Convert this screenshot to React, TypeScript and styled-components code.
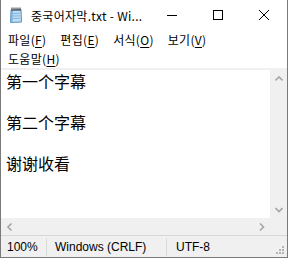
import React from 'react';
import styled, { createGlobalStyle } from 'styled-components';

const Global = createGlobalStyle`
  html, body { margin: 0; padding: 0; background: #fff; }
  body { width: 288px; height: 258px; overflow: hidden; }
`;

const Window = styled.div`
  width: 288px;
  height: 258px;
  box-sizing: border-box;
  border: 1px solid #7a7a7a;
  border-top: none;
  display: flex;
  flex-direction: column;
  background: #fff;
  font-family: "Noto Sans CJK KR", "Noto Sans", sans-serif;
  color: #000;
`;

const TitleBar = styled.div`
  height: 30px;
  display: flex;
  align-items: center;
  flex-shrink: 0;
`;

const AppIcon = styled.svg`
  margin-left: 7px;
  flex-shrink: 0;
`;

const TitleText = styled.div`
  margin-left: 7px;
  font-size: 12px;
  letter-spacing: 0.3px;
  white-space: nowrap;
  flex: 1;
  overflow: hidden;
`;

const CtrlButton = styled.div`
  width: 46px;
  height: 30px;
  display: flex;
  align-items: center;
  justify-content: center;
  flex-shrink: 0;
`;

const MenuBar = styled.div`
  display: flex;
  flex-direction: column;
  border-bottom: 2px solid #f0f0f0;
  flex-shrink: 0;
`;

const MenuRow = styled.div`
  display: flex;
  height: 19px;
`;

const MenuItem = styled.div`
  padding: 0 7px;
  font-size: 12px;
  letter-spacing: 0.3px;
  line-height: 19px;
  white-space: nowrap;
  u { text-decoration: underline; text-underline-offset: 2px; }
`;

const Body = styled.div`
  flex: 1;
  display: flex;
  min-height: 0;
`;

const TextArea = styled.div`
  flex: 1;
  padding: 1px 0 0 5px;
  font-family: "Noto Sans CJK SC", sans-serif;
  font-size: 16px;
  line-height: 20.5px;
  background: #fff;
`;

const Line = styled.div`
  height: 20.5px;
  white-space: pre;
`;

const VScroll = styled.div`
  width: 17px;
  background: #f0f0f0;
  display: flex;
  flex-direction: column;
  justify-content: space-between;
`;

const ScrollBtn = styled.div`
  width: 17px;
  height: 17px;
  display: flex;
  align-items: center;
  justify-content: center;
`;

const HRow = styled.div`
  display: flex;
  height: 17px;
  flex-shrink: 0;
  background: #f0f0f0;
`;

const HScroll = styled.div`
  flex: 1;
  display: flex;
  justify-content: space-between;
`;

const Corner = styled.div`
  width: 17px;
`;

const StatusBar = styled.div`
  height: 21px;
  border-top: 1px solid #d7d7d7;
  background: #f0f0f0;
  display: flex;
  flex-shrink: 0;
  font-family: "Liberation Sans", Arial, sans-serif;
  font-size: 12px;
`;

const StatusCell = styled.div<{ $w?: number; $pl: number; $last?: boolean }>`
  ${(p) => (p.$w ? `width: ${p.$w}px;` : 'flex: 1;')}
  padding-left: ${(p) => p.$pl}px;
  box-sizing: border-box;
  display: flex;
  align-items: center;
  white-space: nowrap;
  ${(p) => (p.$last ? '' : 'border-right: 1px solid #d9d9d9;')}
  margin: 2px 0 1px;
`;

const Grip = styled.svg`
  align-self: flex-end;
  margin: 0 2px 2px 0;
`;

const Chevron: React.FC<{ dir: 'up' | 'down' | 'left' | 'right' }> = ({ dir }) => {
  const pts: Record<string, string> = {
    up: '0.5,4.5 4,1 7.5,4.5',
    down: '0.5,1 4,4.5 7.5,1',
    left: '4.5,0.5 1,4 4.5,7.5',
    right: '1,0.5 4.5,4 1,7.5',
  };
  const vertical = dir === 'up' || dir === 'down';
  return (
    <svg width={vertical ? 8 : 6} height={vertical ? 6 : 8}>
      <polyline points={pts[dir]} fill="none" stroke="#a6a6a6" strokeWidth="1.6" />
    </svg>
  );
};

const lines = ['第一个字幕', '', '第二个字幕', '', '谢谢收看'];

export default function App() {
  return (
    <>
      <Global />
      <Window>
        <TitleBar>
          <AppIcon width="16" height="16" viewBox="0 0 16 16">
            <path d="M3 3 L13 2.5 L13.5 15 L2.5 15.5 Z" fill="#b9ddf5" stroke="#5b8fbf" strokeWidth="1" />
            <path d="M3 3 L5 3 L4.5 15.5 L2.5 15.5 Z" fill="#7fb1db" />
            <line x1="5" y1="6.5" x2="12" y2="6.3" stroke="#8ab6d9" />
            <line x1="5" y1="9" x2="12" y2="8.8" stroke="#8ab6d9" />
            <line x1="5" y1="11.5" x2="12" y2="11.3" stroke="#8ab6d9" />
            {[4, 6, 8, 10, 12].map((x) => (
              <line key={x} x1={x} y1="0.5" x2={x} y2="4" stroke="#333" strokeWidth="1" />
            ))}
          </AppIcon>
          <TitleText>중국어자막.txt - Wi...</TitleText>
          <CtrlButton>
            <svg width="10" height="10">
              <line x1="0" y1="5.5" x2="10" y2="5.5" stroke="#000" />
            </svg>
          </CtrlButton>
          <CtrlButton>
            <svg width="10" height="10">
              <rect x="0.5" y="0.5" width="9" height="9" fill="none" stroke="#000" />
            </svg>
          </CtrlButton>
          <CtrlButton>
            <svg width="10" height="10">
              <line x1="0" y1="0" x2="10" y2="10" stroke="#000" />
              <line x1="10" y1="0" x2="0" y2="10" stroke="#000" />
            </svg>
          </CtrlButton>
        </TitleBar>
        <MenuBar>
          <MenuRow>
            <MenuItem>파일(<u>F</u>)</MenuItem>
            <MenuItem>편집(<u>E</u>)</MenuItem>
            <MenuItem>서식(<u>O</u>)</MenuItem>
            <MenuItem>보기(<u>V</u>)</MenuItem>
          </MenuRow>
          <MenuRow>
            <MenuItem>도움말(<u>H</u>)</MenuItem>
          </MenuRow>
        </MenuBar>
        <Body>
          <TextArea>
            {lines.map((l, i) => (
              <Line key={i}>{l}</Line>
            ))}
          </TextArea>
          <VScroll>
            <ScrollBtn>
              <Chevron dir="up" />
            </ScrollBtn>
            <ScrollBtn>
              <Chevron dir="down" />
            </ScrollBtn>
          </VScroll>
        </Body>
        <HRow>
          <HScroll>
            <ScrollBtn>
              <Chevron dir="left" />
            </ScrollBtn>
            <ScrollBtn>
              <Chevron dir="right" />
            </ScrollBtn>
          </HScroll>
          <Corner />
        </HRow>
        <StatusBar>
          <StatusCell $w={46} $pl={6}>100%</StatusCell>
          <StatusCell $w={120} $pl={8}>Windows (CRLF)</StatusCell>
          <StatusCell $pl={9} $last>UTF-8</StatusCell>
          <Grip width="9" height="9" viewBox="0 0 9 9">
            {[
              [6, 0],
              [3, 3],
              [6, 3],
              [0, 6],
              [3, 6],
              [6, 6],
            ].map(([x, y], i) => (
              <rect key={i} x={x} y={y} width="2" height="2" fill="#b5b5b5" />
            ))}
          </Grip>
        </StatusBar>
      </Window>
    </>
  );
}
